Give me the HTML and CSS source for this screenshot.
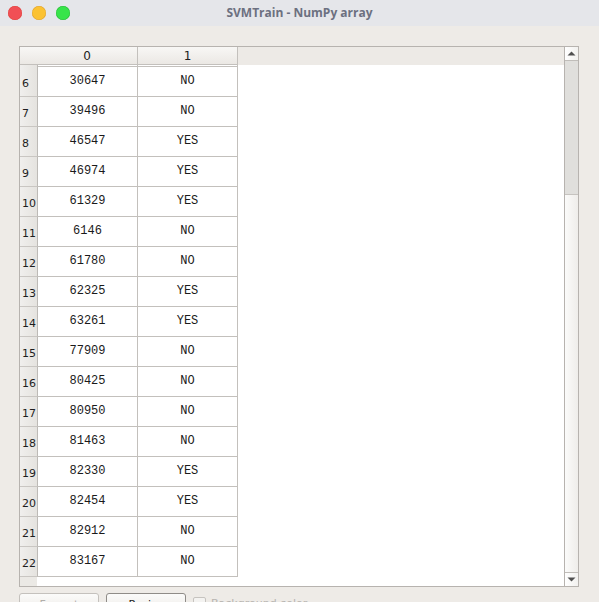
FILE: index.html
```html
<!DOCTYPE html>
<html>
<head>
<meta charset="utf-8">
<link rel="stylesheet" href="styles.css">
</head>
<body>
<div class="window">
  <div class="titlebar">
    <div class="lights">
      <span class="light red"></span>
      <span class="light yellow"></span>
      <span class="light green"></span>
    </div>
    <div class="title">SVMTrain - NumPy array</div>
    <div></div>
  </div>
  <div class="content">
    <div class="frame">
      <div class="viewport">
        <div class="hheader">
          <div class="corner"></div>
          <div class="hcell c0">0</div>
          <div class="hcell c1">1</div>
        </div>
        <div class="tbody">
          <div class="row partial"><div class="vh"></div><div class="cell"></div><div class="cell"></div></div>
          <div class="row"><div class="vh">6</div><div class="cell">30647</div><div class="cell">NO</div></div>
          <div class="row"><div class="vh">7</div><div class="cell">39496</div><div class="cell">NO</div></div>
          <div class="row"><div class="vh">8</div><div class="cell">46547</div><div class="cell">YES</div></div>
          <div class="row"><div class="vh">9</div><div class="cell">46974</div><div class="cell">YES</div></div>
          <div class="row"><div class="vh">10</div><div class="cell">61329</div><div class="cell">YES</div></div>
          <div class="row"><div class="vh">11</div><div class="cell">6146</div><div class="cell">NO</div></div>
          <div class="row"><div class="vh">12</div><div class="cell">61780</div><div class="cell">NO</div></div>
          <div class="row"><div class="vh">13</div><div class="cell">62325</div><div class="cell">YES</div></div>
          <div class="row"><div class="vh">14</div><div class="cell">63261</div><div class="cell">YES</div></div>
          <div class="row"><div class="vh">15</div><div class="cell">77909</div><div class="cell">NO</div></div>
          <div class="row"><div class="vh">16</div><div class="cell">80425</div><div class="cell">NO</div></div>
          <div class="row"><div class="vh">17</div><div class="cell">80950</div><div class="cell">NO</div></div>
          <div class="row"><div class="vh">18</div><div class="cell">81463</div><div class="cell">NO</div></div>
          <div class="row"><div class="vh">19</div><div class="cell">82330</div><div class="cell">YES</div></div>
          <div class="row"><div class="vh">20</div><div class="cell">82454</div><div class="cell">YES</div></div>
          <div class="row"><div class="vh">21</div><div class="cell">82912</div><div class="cell">NO</div></div>
          <div class="row"><div class="vh">22</div><div class="cell">83167</div><div class="cell">NO</div></div>
        </div>
      </div>
      <div class="vscroll">
        <div class="sbtn up"><svg width="9" height="5" viewBox="0 0 9 5"><path d="M0.5 4.5 L4.5 0.5 L8.5 4.5 Z" fill="#505050"/></svg></div>
        <div class="handle"></div>
        <div class="track"></div>
        <div class="sbtn down"><svg width="9" height="5" viewBox="0 0 9 5"><path d="M0.5 0.5 L8.5 0.5 L4.5 4.5 Z" fill="#505050"/></svg></div>
      </div>
    </div>
    <div class="actions">
      <div class="btn disabled">Format</div>
      <div class="btn">Resize</div>
      <div class="check"><span class="box"></span><span class="label">Background color</span></div>
    </div>
  </div>
</div>
</body>
</html>
```
FILE: styles.css
```css
* { box-sizing: border-box; }
html, body {
  margin: 0;
  padding: 0;
  width: 599px;
  height: 602px;
  overflow: hidden;
  background: #eeebe7;
}
.window {
  width: 599px;
  height: 602px;
  display: flex;
  flex-direction: column;
  font-family: "DejaVu Sans", sans-serif;
  font-size: 11px;
  color: #1e1e1e;
}
.titlebar {
  height: 26px;
  flex: none;
  background: #e5e6ea;
  display: grid;
  grid-template-columns: 1fr auto 1fr;
  align-items: center;
}
.lights {
  display: flex;
  gap: 10px;
  padding-left: 8px;
}
.light {
  width: 14px;
  height: 14px;
  border-radius: 50%;
  display: block;
}
.red { background: #f14f55; box-shadow: inset 0 0 0 0.5px #e0443e; }
.yellow { background: #fbc232; box-shadow: inset 0 0 0 0.5px #dea236; }
.green { background: #37e44a; box-shadow: inset 0 0 0 0.5px #2bb93a; }
.title {
  font-family: "Open Sans", "Noto Sans", sans-serif;
  font-weight: 700;
  font-size: 12px;
  color: #6c7080;
  padding-bottom: 1px;
}
.content {
  flex: 1;
  padding: 20px 0 0 19px;
  display: flex;
  flex-direction: column;
}
.frame {
  width: 560px;
  height: 541px;
  border: 1px solid #b7b3af;
  display: flex;
  flex: none;
}
.viewport {
  width: 544px;
  height: 539px;
  background: #ffffff;
  display: flex;
  flex-direction: column;
}
.hheader {
  display: flex;
  height: 18px;
  background: #edeae6;
  flex: none;
}
.corner, .hcell {
  height: 18px;
  background: linear-gradient(#f8f7f5, #ebe8e4);
  border-bottom: 1px solid #c3c0bc;
}
.corner { width: 17px; }
.hcell {
  border-right: 1px solid #c3c0bc;
  display: flex;
  align-items: center;
  justify-content: center;
  font-size: 12px;
}
.hcell.c0 { width: 101px; }
.hcell.c1 { width: 100px; }
.tbody {
  flex: 1;
  display: flex;
  flex-direction: column;
  background: linear-gradient(to right, #ebe9e5 17px, #ffffff 17px);
}
.row {
  display: flex;
  height: 30px;
  flex: none;
}
.row.partial { height: 2px; }
.vh {
  width: 18px;
  border-right: 1px solid #bdbab6;
  border-bottom: 1px solid #c9c6c2;
  background: linear-gradient(to right, #f0efed, #e5e3df);
  padding-left: 2px;
  padding-top: 4px;
  display: flex;
  align-items: center;
  overflow: hidden;
  white-space: nowrap;
}
.cell {
  width: 100px;
  border-right: 1px solid #c3c0bc;
  border-bottom: 1px solid #c3c0bc;
  display: flex;
  align-items: center;
  justify-content: center;
  font-family: "Liberation Mono", monospace;
  font-size: 12px;
  color: #1a1a1a;
  padding-bottom: 1px;
  background: #ffffff;
}
.vscroll {
  width: 14px;
  height: 539px;
  border-left: 1px solid #b7b3af;
  display: flex;
  flex-direction: column;
}
.sbtn {
  height: 14px;
  flex: none;
  background: linear-gradient(to right, #ffffff, #f2f1ef);
  display: flex;
  align-items: center;
  justify-content: center;
}
.sbtn.up { border-bottom: 1px solid #c0bdb9; }
.sbtn.down { border-top: 1px solid #c0bdb9; }
.handle {
  height: 134px;
  flex: none;
  background: #e0dfdc;
  border-bottom: 1px solid #c6c3bf;
}
.track {
  flex: 1;
  background: linear-gradient(to right, #fbfbfa, #efedea);
}
.actions {
  display: flex;
  align-items: flex-start;
  gap: 7px;
  margin-top: 6px;
}
.btn {
  width: 80px;
  height: 22px;
  border: 1px solid #8f8c88;
  border-radius: 3px;
  background: linear-gradient(#fbfbfa, #ece9e5);
  display: flex;
  align-items: center;
  justify-content: center;
  color: #222222;
  flex: none;
}
.btn.disabled {
  border-color: #c4c1bd;
  color: #b1aeaa;
}
.check {
  display: flex;
  align-items: center;
  gap: 5px;
  padding-top: 4px;
  color: #b7b4b0;
}
.box {
  width: 13px;
  height: 13px;
  border: 1px solid #c6c3bf;
  border-radius: 2px;
  background: #f4f3f1;
  display: block;
}
```
